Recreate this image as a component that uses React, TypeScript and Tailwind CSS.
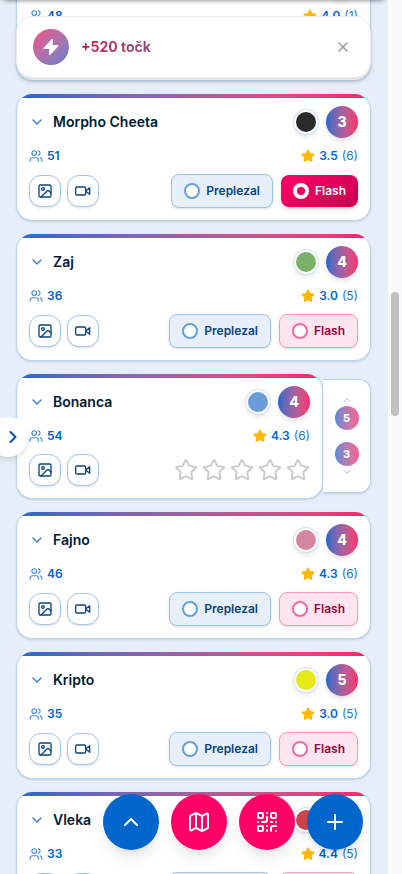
import { ChevronDown, ChevronRight, ChevronUp, Image, Map, Plus, QrCode, Star, Users, X } from 'lucide-react';

type Route = {
  id: string;
  name: string;
  climbers: number;
  rating: string;
  votes: number;
  grade: number;
  dot: string;
  status?: 'flash' | 'rating';
};

const ROUTES: Route[] = [
  { id: 'lisa', name: 'Lisa', climbers: 48, rating: '4.0', votes: 1, grade: 3, dot: 'bg-[#2a2a2a]' },
  { id: 'morpho', name: 'Morpho Cheeta', climbers: 51, rating: '3.5', votes: 6, grade: 3, dot: 'bg-[#2a2a2a]', status: 'flash' },
  { id: 'zaj', name: 'Zaj', climbers: 36, rating: '3.0', votes: 5, grade: 4, dot: 'bg-[#7bb069]' },
  { id: 'bonanca', name: 'Bonanca', climbers: 54, rating: '4.3', votes: 6, grade: 4, dot: 'bg-[#6c9bd9]', status: 'rating' },
  { id: 'fajno', name: 'Fajno', climbers: 46, rating: '4.3', votes: 6, grade: 4, dot: 'bg-[#d4869f]' },
  { id: 'kripto', name: 'Kripto', climbers: 35, rating: '3.0', votes: 5, grade: 5, dot: 'bg-[#e6e619]' },
  { id: 'vleka', name: 'Vleka', climbers: 33, rating: '4.4', votes: 5, grade: 4, dot: 'bg-[#d0454c]' },
];

const ICON_BUTTON =
  'flex size-8 items-center justify-center rounded-[12px] border border-[#a3c4ea] bg-white text-[#0a4480] shadow-sm';

function BoltIcon() {
  return (
    <svg viewBox="0 0 24 24" className="size-5" fill="currentColor" stroke="currentColor" strokeWidth="2" strokeLinejoin="round">
      <path d="M13.5 3.5 4 13.5h7L10.5 20.5 20 10.5h-7z" />
    </svg>
  );
}

function VideoIcon() {
  return (
    <svg viewBox="0 0 24 24" className="size-4" fill="none" stroke="currentColor" strokeWidth="2" strokeLinecap="round" strokeLinejoin="round">
      <path d="m22 7-6 5 6 5V7Z" />
      <rect x="1" y="6" width="15" height="12" rx="2" />
    </svg>
  );
}

function RouteActions({ status }: { status?: Route['status'] }) {
  if (status === 'rating') {
    return (
      <div className="flex gap-1">
        {[1, 2, 3, 4, 5].map((n) => (
          <button key={n} type="button" aria-label={`Ocena ${n}`} className="text-[#cccccc]">
            <Star className="size-6" strokeWidth={2} />
          </button>
        ))}
      </div>
    );
  }

  return (
    <div className="flex items-center gap-2">
      <button
        type="button"
        className="flex h-[34px] items-center gap-[6px] rounded-lg border border-[#9cc2ea] bg-[#e6effa] px-3 text-xs font-semibold text-[#0a4480] shadow-sm"
      >
        <span className="size-4 rounded-full border-2 border-[#669fdc] bg-white" />
        Preplezal
      </button>
      {status === 'flash' ? (
        <button
          type="button"
          className="flex h-8 items-center gap-[6px] rounded-lg bg-linear-135 from-[#ff0066] to-[#cc0052] px-3 text-xs font-semibold text-white shadow-md"
        >
          <span className="size-4 rounded-full border-4 border-white" />
          Flash
        </button>
      ) : (
        <button
          type="button"
          className="flex h-[34px] items-center gap-[6px] rounded-lg border border-[#f59abd] bg-[#ffe5f0] px-3 text-xs font-semibold text-[#99003d] shadow-sm"
        >
          <span className="size-4 rounded-full border-2 border-[#f7699f] bg-white" />
          Flash
        </button>
      )}
    </div>
  );
}

function RouteCard({ route }: { route: Route }) {
  return (
    <article className="relative min-w-0 flex-1 overflow-hidden rounded-2xl border border-t-0 border-[#b8d4f0] bg-white p-3 shadow-sm">
      <div className="absolute inset-x-0 top-0 h-1 bg-linear-to-r from-[#1f66cc] to-[#ff1a66]" />

      {/* Name, hold colour and grade */}
      <div className="flex items-center justify-between">
        <h3 className="flex items-center gap-2 text-sm font-semibold text-[#001a33]">
          <ChevronDown className="size-4 text-[#3380d6]" strokeWidth={2} />
          {route.name}
        </h3>
        <div className="flex items-center gap-2">
          <span className={`size-6 rounded-full border-2 border-white shadow-md ring-1 ring-[#d0e0f2] ${route.dot}`} />
          <span className="flex size-8 items-center justify-center rounded-full bg-linear-to-r from-[#1f66cc] to-[#ff2468] text-sm font-extrabold text-white shadow-md">
            {route.grade}
          </span>
        </div>
      </div>

      {/* Climbers and rating */}
      <div className="my-2 flex items-center justify-between text-xs leading-5 text-[#0066cc]">
        <span className="flex items-center gap-1 font-semibold">
          <Users className="size-[14px] text-[#4d8fdb]" strokeWidth={2} />
          {route.climbers}
        </span>
        <span className="flex items-center gap-1">
          <Star className="size-[14px] fill-[#ffb800] text-[#ffb800]" />
          <span className="font-semibold">{route.rating}</span>
          <span className="text-[#2474c8]">({route.votes})</span>
        </span>
      </div>

      <div className="flex items-center justify-between">
        <div className="flex gap-[6px]">
          <button type="button" aria-label="Slike" className={ICON_BUTTON}>
            <Image className="size-4" />
          </button>
          <button type="button" aria-label="Video" className={ICON_BUTTON}>
            <VideoIcon />
          </button>
        </div>
        <RouteActions status={route.status} />
      </div>
    </article>
  );
}

function GradeVote() {
  return (
    <div className="mt-[5px] mb-[6px] flex w-12 flex-col items-center justify-center gap-3 rounded-r-xl border border-l-0 border-[#b8d4f0] bg-white text-[11px] font-extrabold text-white shadow-sm">
      <button type="button" className="flex flex-col items-center">
        <ChevronUp className="size-3 text-[#99b8dd]" />
        <span className="flex size-6 items-center justify-center rounded-full bg-linear-to-r from-[#5c87d4] to-[#ff5c8f]">5</span>
      </button>
      <button type="button" className="flex flex-col items-center">
        <span className="flex size-6 items-center justify-center rounded-full bg-linear-to-r from-[#5c87d4] to-[#ff5c8f]">3</span>
        <ChevronDown className="size-3 text-[#99b8dd]" />
      </button>
    </div>
  );
}

function Toast() {
  return (
    <div
      role="status"
      className="absolute inset-x-4 top-4 flex h-[62px] items-center gap-3 rounded-2xl border border-[#ececf0] bg-white px-4 shadow-md"
    >
      <span className="flex size-9 items-center justify-center rounded-full bg-linear-135 from-[#f04a84] to-[#5a80d0] text-white">
        <BoltIcon />
      </span>
      <p className="flex-1 text-sm leading-5 font-bold">
        <span className="bg-linear-to-r from-[#c4124f] to-[#8f4a75] bg-clip-text text-transparent">+520 točk</span>
      </p>
      <button type="button" aria-label="Zapri" className="mr-[3px] text-[#999999]">
        <X className="size-4" strokeWidth={2} />
      </button>
    </div>
  );
}

export default function App() {
  return (
    <div className="flex h-screen overflow-hidden bg-[#e5eef9] font-['Inter',sans-serif]">
      <main className="relative min-w-0 flex-1 overflow-hidden">
        <div className="-mt-[46px] flex flex-col gap-[13px] px-4">
          {ROUTES.map((route) => (
            <div key={route.id} className="flex">
              <RouteCard route={route} />
              {route.status === 'rating' && <GradeVote />}
            </div>
          ))}
        </div>

        <div className="absolute inset-x-0 -top-2 h-2 rounded-b-2xl shadow-[0_1px_4px_rgba(0,0,0,0.4)]" />
        <Toast />

        <button
          type="button"
          aria-label="Odpri meni"
          className="absolute top-[417px] -left-3 flex size-10 items-center justify-end rounded-full bg-white pr-[5px] text-[#0a52a3] shadow-md"
        >
          <ChevronRight className="size-5" strokeWidth={2.5} />
        </button>

        <nav className="absolute right-6 bottom-6 flex gap-3 text-white">
          <button type="button" aria-label="Na vrh" className="flex size-14 items-center justify-center rounded-full bg-[#0066cc] shadow-lg">
            <ChevronUp className="size-6" strokeWidth={2} />
          </button>
          <button type="button" aria-label="Zemljevid" className="flex size-14 items-center justify-center rounded-full bg-[#ff0066] shadow-lg">
            <Map className="size-6" strokeWidth={2} />
          </button>
          <button type="button" aria-label="QR koda" className="flex size-14 items-center justify-center rounded-full bg-[#ff0066] shadow-lg">
            <QrCode className="size-6" strokeWidth={2} />
          </button>
          <button type="button" aria-label="Dodaj" className="flex size-14 items-center justify-center rounded-full bg-[#0066cc] shadow-lg">
            <Plus className="size-6" strokeWidth={2} />
          </button>
        </nav>
      </main>

      {/* Scrollbar */}
      <div className="w-[15px] border-l border-[#ececec] bg-[#fafafa] pt-[292px]">
        <div className="ml-[3px] h-[124px] w-2 rounded-full bg-[#c1c1c1]" />
      </div>
    </div>
  );
}
